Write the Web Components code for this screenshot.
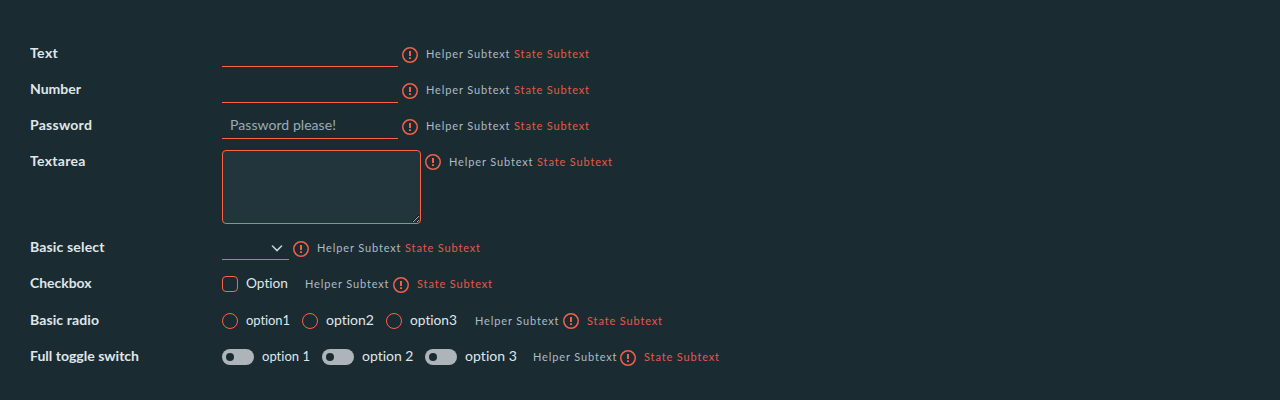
<!DOCTYPE html>
<html lang="en"><head><meta charset="utf-8"><title>Form states</title>
<style>
html{background:#1b2b32}
body{margin:0;width:1280px;height:400px;overflow:hidden;background:#1b2b32;font-family:Lato,"Open Sans",sans-serif;font-size:13px;color:#dfe6ea;font-variant-ligatures:none}
form-list{height:364px}
</style></head><body>
<form-list>
<form-row label="Text" w="28"><text-field></text-field><error-icon></error-icon><sub-text gap="8">Helper Subtext</sub-text><sub-text gap="4" state>State Subtext</sub-text></form-row>
<form-row label="Number" w="51"><text-field></text-field><error-icon></error-icon><sub-text gap="8">Helper Subtext</sub-text><sub-text gap="4" state>State Subtext</sub-text></form-row>
<form-row label="Password" w="62"><text-field placeholder="Password please!"></text-field><error-icon></error-icon><sub-text gap="8">Helper Subtext</sub-text><sub-text gap="4" state>State Subtext</sub-text></form-row>
<form-row label="Textarea" w="55.5" tall><text-area></text-area><error-icon flat></error-icon><sub-text gap="8">Helper Subtext</sub-text><sub-text gap="4" state>State Subtext</sub-text></form-row>
<form-row label="Basic select" w="74.5"><select-field></select-field><error-icon></error-icon><sub-text gap="8">Helper Subtext</sub-text><sub-text gap="4" state>State Subtext</sub-text></form-row>
<form-row label="Checkbox" w="61.5"><choice-item kind="box" w="42">Option</choice-item><sub-text gap="17">Helper Subtext</sub-text><error-icon></error-icon><sub-text gap="8" state>State Subtext</sub-text></form-row>
<form-row label="Basic radio" w="69" shift><choice-item kind="radio" w="44">option1</choice-item><choice-item kind="radio" w="48" gap="12">option2</choice-item><choice-item kind="radio" w="47" gap="12">option3</choice-item><sub-text gap="18">Helper Subtext</sub-text><error-icon flat></error-icon><sub-text gap="8" state>State Subtext</sub-text></form-row>
<form-row label="Full toggle switch" w="109"><choice-item kind="toggle" w="48">option 1</choice-item><choice-item kind="toggle" w="51.5" gap="12">option 2</choice-item><choice-item kind="toggle" w="52" gap="11.5">option 3</choice-item><sub-text gap="16">Helper Subtext</sub-text><error-icon style="margin-left:3px"></error-icon><sub-text gap="8" state>State Subtext</sub-text></form-row>
</form-list>
<script>
const define = (name, html, setup) => {
  const t = document.createElement('template');
  t.innerHTML = html;
  customElements.define(name, class extends HTMLElement {
    connectedCallback() {
      if (this.shadowRoot) return;
      this.attachShadow({mode: 'open'}).append(t.content.cloneNode(true));
      if (setup) setup(this, this.shadowRoot);
    }
  });
};
// Widens a run of text to a fixed width: glyphs up to the "stretch" limit, the rest by tracking.
define('fit-text', `<style>:host{display:block;white-space:pre;flex:none}span{display:inline-block;transform-origin:0 50%}</style><span><slot></slot></span>`, (el, root) => {
  const w = +el.getAttribute('w'), s = root.querySelector('span');
  el.style.width = w + 'px';
  const natural = s.getBoundingClientRect().width;
  const k = Math.max(1, Math.min(+(el.getAttribute('stretch') || 1.08), w / natural));
  s.style.letterSpacing = (w / k - natural) / (el.textContent.length - .5) + 'px';
  if (k > 1) s.style.transform = `scaleX(${k})`;
});
define('form-list', `<style>:host{display:flex;flex-direction:column;padding-top:36px}</style><slot></slot>`);
define('form-row', `<style>:host{display:grid;grid-template-columns:192px 1fr;height:36px;margin-left:30px;line-height:36px;flex:none}
:host([tall]){height:86px}:host([shift]){margin-top:1px}
.label{font-weight:700;color:#dfe6e9;line-height:34px}.c{display:flex;align-items:flex-start}</style><div class="label"></div><div class="c"><slot></slot></div>`, (el, root) => {
  const f = document.createElement('fit-text');
  f.setAttribute('w', el.getAttribute('w'));
  f.textContent = el.getAttribute('label');
  root.querySelector('.label').append(f);
});
define('sub-text', `<style>:host{display:block;font-size:11px;color:#adbbc4}:host([state]){color:#e35a46}</style>`, (el, root) => {
  el.style.marginLeft = el.getAttribute('gap') + 'px';
  const f = document.createElement('fit-text');
  f.setAttribute('w', el.hasAttribute('state') ? 75.5 : 84);
  f.setAttribute('stretch', 1);
  f.textContent = el.textContent;
  root.append(f);
});
define('error-icon', `<style>:host{display:block;width:16px;height:16px;margin:11px 0 0 4px;flex:none}:host([flat]){margin-top:10px}svg{display:block}</style>
<svg width="16" height="16" viewBox="0 0 16 16" fill="none" stroke="#f0604a"><circle cx="8" cy="8" r="7.25" stroke-width="1.5"/><path d="M8 4v5M8 10.2v1.8" stroke-width="2"/></svg>`);
define('text-field', `<style>:host{display:block;box-sizing:border-box;width:176px;height:24px;margin-top:7px;padding-left:8px;line-height:20px;border-bottom:1px solid #ff6245;color:#9cabb3}</style>`, (el, root) => {
  const p = el.getAttribute('placeholder');
  if (!p) return;
  const f = document.createElement('fit-text');
  f.setAttribute('w', 106);
  f.textContent = p;
  root.append(f);
});
define('text-area', `<style>:host{display:block;width:199px;height:74px;margin-top:6px}textarea{display:block;box-sizing:border-box;width:199px;height:74px;margin:0;border:1px solid #ff6245;border-radius:4px;background:#22343c;color:#dfe6ea;outline:0;color-scheme:dark;resize:both}</style><textarea></textarea>`);
define('select-field', `<style>:host{display:flex;justify-content:flex-end;box-sizing:border-box;width:67px;height:24px;margin-top:6px;padding:9px 6px 0 0;border-bottom:1px solid #ff6245}svg{display:block}</style><svg width="12" height="8" fill="none" stroke="#c5d0d6" stroke-width="1.6" stroke-linecap="round"><path d="M1.5 1 6 5.5 10.5 1"/></svg>`);
define('choice-item', `<style>:host{display:flex;flex:none;color:#dfe6ea;line-height:34px}i{box-sizing:border-box;display:block;width:16px;height:16px;border:1px solid #ff6245;margin:10px 8px 0 0}
:host([kind=box]) i{border-radius:4px}:host([kind=radio]) i{border-radius:50%}
:host([kind=toggle]) i{width:32px;border:0;border-radius:8px;background:#adb5bb;padding:4px}:host([kind=toggle]) i::before{content:"";display:block;width:8px;height:8px;border-radius:50%;background:#1b2b32}</style><i></i>`, (el, root) => {
  el.style.marginLeft = (el.getAttribute('gap') || 0) + 'px';
  const f = document.createElement('fit-text');
  f.setAttribute('w', el.getAttribute('w'));
  f.textContent = el.textContent;
  root.append(f);
});
</script></body></html>
